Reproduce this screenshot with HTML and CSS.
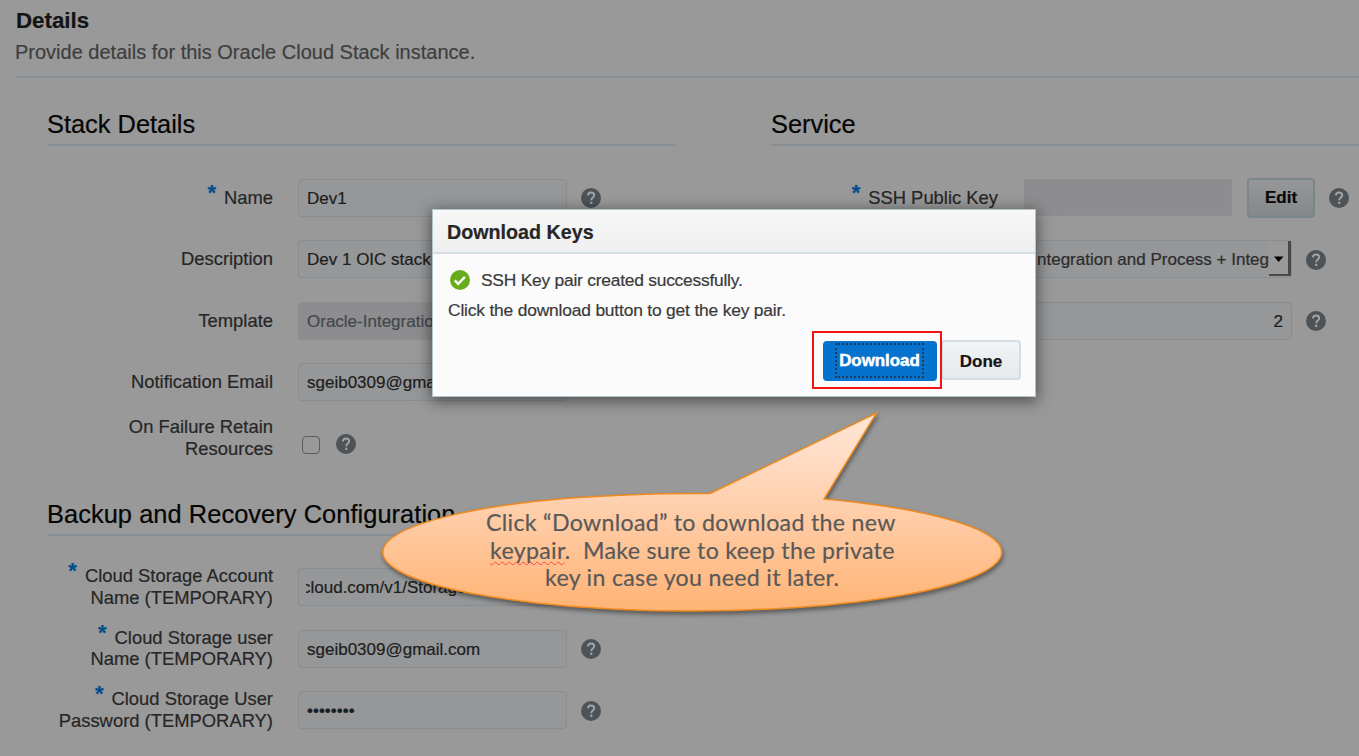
FILE: index.html
```html
<!DOCTYPE html>
<html lang="en">
<head>
<meta charset="utf-8">
<title>Details</title>
<link rel="stylesheet" href="styles.css">
</head>
<body>
<svg class="defs" width="0" height="0">
  <symbol id="help" viewBox="0 0 20 20">
    <circle cx="10" cy="10" r="10" fill="#4d5357"/>
    <path d="M6.900 7.400C7 5.400 8.200 4.500 10 4.500c1.900 0 3.200 1 3.200 2.700 0 2.300-3 2.500-3 5.100" fill="none" stroke="#a2a5a7" stroke-width="1.900"/>
    <rect x="9.100" y="13.700" width="2.200" height="2.200" fill="#a2a5a7"/>
  </symbol>
</svg>
<main class="page">
  <header class="page-head">
    <h1>Details</h1>
    <p>Provide details for this Oracle Cloud Stack instance.</p>
  </header>
  <div class="columns">
    <div class="column">
      <section>
        <h2>Stack Details</h2>
        <div class="rows">
          <div class="row"><label><b>*</b>Name</label><div class="field">Dev1</div><svg class="help"><use href="#help"/></svg></div>
          <div class="row"><label>Description</label><div class="field">Dev 1 OIC stack</div></div>
          <div class="row"><label>Template</label><div class="field disabled">Oracle-Integration</div></div>
          <div class="row"><label>Notification Email</label><div class="field">sgeib0309@gmail.com</div></div>
          <div class="row check"><label>On Failure Retain<br>Resources</label><span class="box"></span><svg class="help"><use href="#help"/></svg></div>
        </div>
      </section>
      <section class="backup">
        <h2>Backup and Recovery Configuration</h2>
        <div class="rows">
          <div class="row"><label><b>*</b>Cloud Storage Account<br>Name (TEMPORARY)</label><div class="field scrolled"><span class="clip"><span>cloud.com/v1/Storage</span></span></div></div>
          <div class="row"><label><b>*</b>Cloud Storage user<br>Name (TEMPORARY)</label><div class="field">sgeib0309@gmail.com</div><svg class="help"><use href="#help"/></svg></div>
          <div class="row"><label><b>*</b>Cloud Storage User<br>Password (TEMPORARY)</label><div class="field">••••••••</div><svg class="help"><use href="#help"/></svg></div>
        </div>
      </section>
    </div>
    <div class="column service">
      <section>
        <h2>Service</h2>
        <div class="rows">
          <div class="row"><label><b>*</b>SSH Public Key</label><div class="field disabled key"></div><div class="edit">Edit</div><svg class="help"><use href="#help"/></svg></div>
          <div class="row"><label></label><div class="field select"><span>ntegration and Process + Integ</span><i><svg width="12" height="7" viewBox="0 0 12 7"><path d="M1 .5h9.500L5.700 6z"/></svg></i></div><svg class="help"><use href="#help"/></svg></div>
          <div class="row"><label></label><div class="field number">2</div><svg class="help"><use href="#help"/></svg></div>
        </div>
      </section>
    </div>
  </div>

  <div class="dialog">
    <h3>Download Keys</h3>
    <div class="dialog-body">
      <p class="ok"><svg width="20" height="20" viewBox="0 0 20 20"><circle cx="10" cy="10" r="10" fill="#67ad1b"/><path d="M4.800 10.300l3.400 3.500 6.700-6.900" fill="none" stroke="#fff" stroke-width="2.400"/></svg>SSH Key pair created successfully.</p>
      <p class="hint">Click the download button to get the key pair.</p>
    </div>
    <div class="actions">
      <div class="highlight"><div class="download"><span>Download</span></div></div>
      <div class="done">Done</div>
    </div>
  </div>

  <div class="callout">
    <svg width="640" height="220" viewBox="372 403 640 220">
      <defs><linearGradient id="peach" x1="0" y1="0" x2="0" y2="1"><stop offset="0" stop-color="#ffe7d8"/><stop offset=".45" stop-color="#ffd0ae"/><stop offset="1" stop-color="#ffb374"/></linearGradient></defs>
      <path d="M710 493.500L876.500 413 824 499A309.500 58.800 0 1 1 710 493.500z" fill="url(#peach)" stroke="#f08a1d" stroke-width="1.500"/>
    </svg>
    <div class="callout-text"><p>Click “Download” to download the new</p><p class="l2"><span>keypair</span>.&nbsp; Make sure to keep the private</p><p class="l3">key in case you need it later.</p></div>
  </div>
</main>
</body>
</html>
```
FILE: styles.css
```css
* { box-sizing: border-box; }
body { margin: 0; background: #999; font-family: "Liberation Sans", Arial, sans-serif; color: #262626; -webkit-text-stroke: .2px; }
h1, h2, h3, p { margin: 0; font-weight: normal; white-space: nowrap; }
.defs { position: absolute; }
.page { position: relative; width: 1359px; height: 756px; overflow: hidden; }
.page-head { height: 78px; margin-left: 15px; padding-top: 7px; border-bottom: 2px solid #888f94; }
h1 { padding-left: 1px; font-size: 22.300px; line-height: 27px; font-weight: bold; color: #141414; }
.page-head p { font-size: 20px; line-height: 36px; color: #3e3e40; }
.columns { display: flex; gap: 95px; padding-left: 47px; }
.column { width: 629px; flex: none; }
.service { width: 588px; }
h2 { height: 68px; padding-top: 31px; font-size: 25.400px; line-height: 30px; color: #050505; border-bottom: 2px solid #888f94; }
.backup h2 { height: 73px; padding-top: 36px; letter-spacing: .06px; }
.rows { padding-top: 20.500px; }
.row { display: flex; align-items: center; height: 61.500px; }
label { width: 226px; margin-right: 25px; flex: none; text-align: right; font-size: 18.400px; line-height: 21.500px; white-space: nowrap; }
.service label { width: 227px; margin-right: 26px; }
label b { display: inline-block; height: 0; font-size: 22px; line-height: 0; color: #004d8c; margin-right: 8px; transform: translateY(-4px); }
.field { width: 269px; height: 38px; margin-top: 1px; padding-left: 8px; flex: none; border: 1.500px solid #878d91; border-radius: 4px; background: #959799; font-size: 17px; line-height: 37px; color: #1d1d1d; white-space: nowrap; }
.disabled { background: #8d8d8f; border-color: #8f8f91; color: #43474c; }
.help { width: 20px; height: 20px; margin: 2px 0 0 14px; flex: none; }
.check { height: 50px; }
.check .box { width: 18px; height: 18px; margin: 14px 0 0 4px; border: 1.500px solid #5c5c5c; border-radius: 4px; }
.check .help { margin: 12px 0 0 16px; }
.scrolled .clip { display: block; overflow: hidden; margin-left: -1px; }
.clip span { margin-left: -4px; }
.key { width: 208px; height: 37px; margin-top: 0; border-radius: 2px; }
.edit { width: 68px; height: 40px; margin: 2px 0 0 15px; border: 2px solid #7b868c; border-radius: 4px; background: linear-gradient(#959799, #858889); text-align: center; font-size: 17px; font-weight: bold; line-height: 36px; color: #080808; }
.select { display: flex; padding: 0; width: 268px; }
.select span { width: 245px; padding-left: 12px; overflow: hidden; color: #2c2c2c; }
.select i { width: 22px; height: 35px; padding-top: 3px; border-right: 3px solid #484848; border-bottom: 2px solid #484848; background: #999; line-height: 27px; text-align: center; }
.number { width: 268px; padding-right: 8px; text-align: right; }
.dialog { position: absolute; left: 432px; top: 209px; width: 604px; height: 188px; background: #fbfbfb; border: 1.500px solid #b4c2ca; box-shadow: 0 3px 14px 1px rgba(0,0,0,.5); color: #3a3a3a; }
h3 { height: 44px; padding-left: 14px; font-size: 19.700px; line-height: 44px; font-weight: bold; color: #262626; background: linear-gradient(#f7f7f7, #efefef); border-bottom: 2px solid #d5dfe6; }
.dialog-body { padding: 11px 0 0 15px; font-size: 17.400px; line-height: 30px; }
.ok { display: flex; align-items: center; gap: 11px; margin-left: 2px; letter-spacing: -.23px; }
.hint { letter-spacing: -.18px; }
.actions { display: flex; padding: 6px 0 0 379px; }
.highlight { width: 130px; height: 58px; padding: 8px 9px; border: 2px solid #f01414; z-index: 1; }
.download { width: 114px; height: 40px; padding: 2px 12px; border-radius: 4px; background: #0572ce; color: #fff; font-weight: bold; font-size: 16.900px; -webkit-text-stroke: .5px; }
.download span { display: block; width: 89px; height: 35px; border: 2px dotted #123c63; text-align: center; line-height: 31px; }
.done { width: 80px; height: 40px; margin: 9px 0 0 -1px; border: 2px solid #d3dde3; border-radius: 4px; background: linear-gradient(#f1f3f4, #e5eaec); text-align: center; font-size: 17px; font-weight: bold; line-height: 39px; color: #141414; }
.callout { position: absolute; left: 372px; top: 403px; width: 640px; height: 220px; font-family: Lato, sans-serif; font-size: 23.200px; line-height: 27.500px; letter-spacing: .3px; color: #595959; }
.callout svg { display: block; filter: drop-shadow(1px 3px 2px rgba(0,0,0,.4)); }
.callout-text { position: absolute; left: 114px; top: 106px; }
.l2 { padding-left: 4px; }
.l2 span { text-decoration: underline wavy #f4474b 1px; text-underline-offset: 2px; text-decoration-skip-ink: none; }
.l3 { padding-left: 59px; }
```
